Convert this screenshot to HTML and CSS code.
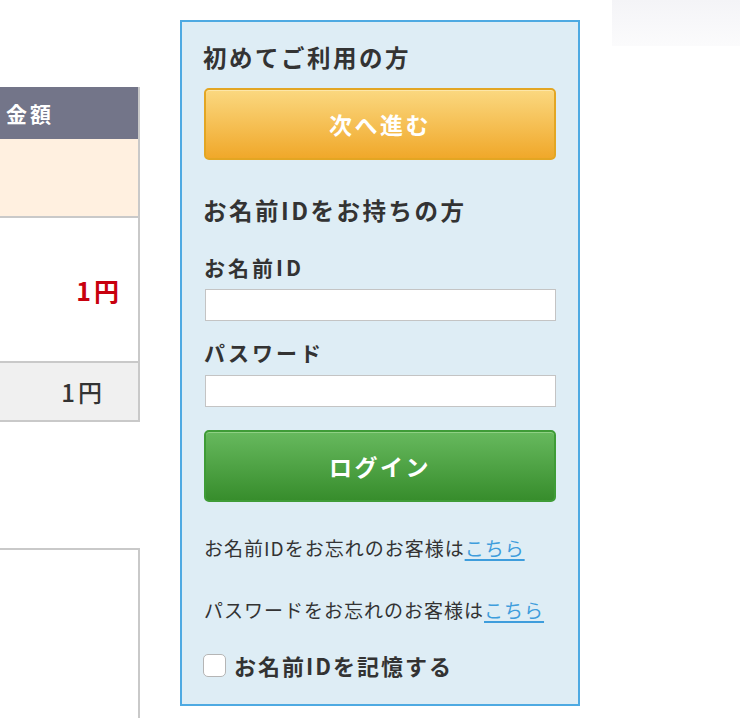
FILE: index.html
```html
<!DOCTYPE html>
<html lang="ja">
<head>
<meta charset="utf-8">
<title>ログイン</title>
<link rel="stylesheet" href="styles.css">
</head>
<body>
<div class="page">
  <div class="left">
    <div class="table">
      <div class="th">金額</div>
      <div class="row-peach"></div>
      <div class="row-white"><span class="price-red">1円</span></div>
      <div class="row-grey"><span class="price">1円</span></div>
    </div>
    <div class="lower-box"></div>
  </div>

  <div class="panel">
    <h2 class="heading">初めてご利用の方</h2>
    <a class="btn btn-orange" href="#">次へ進む</a>

    <h2 class="heading heading-member">お名前IDをお持ちの方</h2>
    <label class="label" for="uid">お名前ID</label>
    <input class="field" id="uid" type="text">
    <label class="label label-pw" for="pw">パスワード</label>
    <input class="field" id="pw" type="password">

    <a class="btn btn-green" href="#">ログイン</a>

    <p class="note">お名前IDをお忘れのお客様は<a href="#">こちら</a></p>
    <p class="note note-pw">パスワードをお忘れのお客様は<a href="#">こちら</a></p>

    <label class="remember"><span class="check"></span>お名前IDを記憶する</label>
  </div>

  <div class="right">
    <div class="fade-box"></div>
  </div>
</div>
</body>
</html>
```

FILE: styles.css
```css
* { box-sizing: border-box; }

html, body {
  margin: 0;
  padding: 0;
  background: #fff;
}

body {
  font-family: "Noto Sans CJK JP", "Noto Sans", sans-serif;
  color: #333;
  width: 740px;
  height: 718px;
  overflow: hidden;
}

.page {
  display: flex;
  align-items: flex-start;
}

/* ---------- left (cut-off table) ---------- */
.left {
  width: 140px;
  flex: none;
  padding-top: 87px;
}

.table {
  border-right: 2px solid #c9c9c9;
  border-bottom: 2px solid #c9c9c9;
}

.th {
  height: 52px;
  background: #737589;
  color: #fff;
  font-weight: 700;
  font-size: 21px;
  letter-spacing: 3px;
  line-height: 52px;
  padding-left: 6px;
}

.row-peach {
  height: 79px;
  background: #fff0e0;
  border-bottom: 2px solid #c9c9c9;
}

.row-white {
  height: 145px;
  background: #fff;
  border-bottom: 2px solid #c9c9c9;
  display: flex;
  align-items: center;
  justify-content: flex-end;
  padding-right: 19px;
}

.row-grey {
  height: 57px;
  background: #f0f0f0;
  display: flex;
  align-items: center;
  justify-content: flex-end;
  padding-right: 36px;
}

.price-red {
  color: #c8000e;
  font-weight: 700;
  font-size: 25px;
  letter-spacing: 3px;
  margin-right: -3px;
}

.price {
  color: #333;
  font-size: 24px;
  font-weight: 500;
  letter-spacing: 3px;
  margin-right: -3px;
}

.lower-box {
  margin-top: 126px;
  height: 200px;
  border-top: 2px solid #c9c9c9;
  border-right: 2px solid #c9c9c9;
}

/* ---------- login panel ---------- */
.panel {
  width: 400px;
  flex: none;
  margin-left: 40px;
  margin-top: 20px;
  height: 686px;
  border: 2px solid #4eaae2;
  background: #deedf5;
  padding: 20px 22px 0;
  display: flex;
  flex-direction: column;
}

.heading {
  margin: 0 0 0 -1px;
  font-size: 23.5px;
  letter-spacing: 2.5px;
  font-weight: 700;
  line-height: 30px;
  color: #333;
  white-space: nowrap;
}

.btn {
  display: flex;
  align-items: center;
  justify-content: center;
  height: 72px;
  border-radius: 5px;
  color: #fff;
  font-size: 23px;
  font-weight: 700;
  text-decoration: none;
  letter-spacing: 2.5px;
}

.btn-orange {
  margin-top: 16px;
  border: 2px solid #e3a623;
  background: linear-gradient(#fbd880, #f0a82a);
  box-shadow: inset 0 1px 0 #fde6a8;
}

.btn-green {
  margin-top: 23px;
  border: 2px solid #3f9c37;
  background: linear-gradient(#67b95e, #378d2c);
  box-shadow: inset 0 1px 0 #8fd084;
}

.heading-member {
  margin-top: 35px;
}

.label {
  display: block;
  margin-top: 27px;
  font-size: 21px;
  letter-spacing: 3px;
  font-weight: 700;
  line-height: 30px;
}

.label-pw {
  margin-top: 16px;
}

.field {
  display: block;
  margin: 7px 0 0 1px;
  width: 351px;
  height: 32px;
  border: 1px solid #c4c4c4;
  background: #fff;
  outline: none;
  padding: 0 6px;
  font: inherit;
}

.label-pw + .field {
  margin-top: 8px;
}

.note {
  margin: 34px 0 0;
  font-size: 19px;
  letter-spacing: 1px;
  line-height: 24px;
  color: #333;
  white-space: nowrap;
}

.note a {
  color: #3e9ddc;
  text-decoration: underline;
  text-decoration-color: #3e9ddc;
  text-underline-offset: 3px;
  text-decoration-thickness: 2px;
}

.note-pw {
  margin-top: 38px;
}

.remember {
  display: flex;
  align-items: center;
  margin-top: 28px;
  font-size: 22px;
  letter-spacing: 2px;
  font-weight: 700;
  line-height: 30px;
  white-space: nowrap;
}

.check {
  width: 23px;
  height: 23px;
  border: 1px solid #b5b5b5;
  border-radius: 5px;
  background: #fff;
  margin: 0 8px 0 -1px;
  flex: none;
}

/* ---------- right ---------- */
.right {
  flex: 1;
  padding-left: 32px;
}

.fade-box {
  height: 46px;
  background: linear-gradient(#f4f4f7, #fbfbfc);
}
```
